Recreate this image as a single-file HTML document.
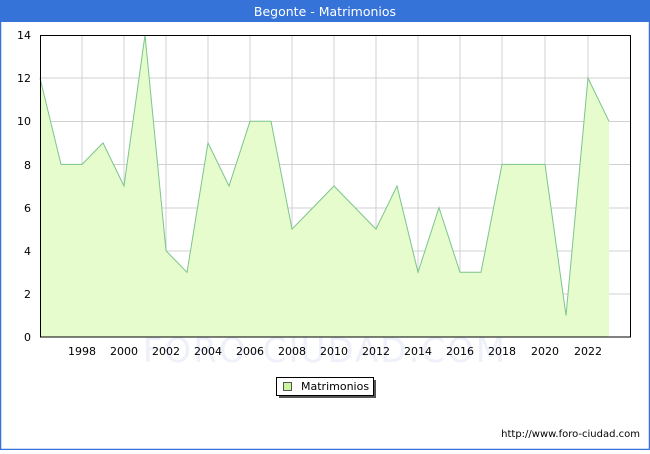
<!DOCTYPE html>
<html><head><meta charset="utf-8"><style>
body{margin:0;width:650px;height:450px;overflow:hidden;font-family:"DejaVu Sans","Liberation Sans",sans-serif;}
</style></head><body>
<svg width="650" height="450" xmlns="http://www.w3.org/2000/svg" font-family="DejaVu Sans, Liberation Sans, sans-serif">
<rect x="0" y="0" width="650" height="450" fill="#fff"/>
<rect x="0.5" y="0.5" width="649" height="449" fill="none" stroke="#3573d9" stroke-width="1.5"/>
<rect x="0" y="0" width="650" height="22" fill="#3573d9"/>
<text x="325" y="16" fill="#fff" font-size="12.5" text-anchor="middle">Begonte - Matrimonios</text>
<text x="325" y="362" fill="#eef0fa" font-size="34" text-anchor="middle" letter-spacing="2">FORO-CIUDAD.COM</text>
<g stroke="#d0d0d0" stroke-width="1">
<line x1="82" y1="35" x2="82" y2="337"/><line x1="124" y1="35" x2="124" y2="337"/><line x1="166" y1="35" x2="166" y2="337"/><line x1="208" y1="35" x2="208" y2="337"/><line x1="250" y1="35" x2="250" y2="337"/><line x1="292" y1="35" x2="292" y2="337"/><line x1="334" y1="35" x2="334" y2="337"/><line x1="376" y1="35" x2="376" y2="337"/><line x1="418" y1="35" x2="418" y2="337"/><line x1="460" y1="35" x2="460" y2="337"/><line x1="502" y1="35" x2="502" y2="337"/><line x1="545" y1="35" x2="545" y2="337"/><line x1="588" y1="35" x2="588" y2="337"/>
<line x1="40" y1="294" x2="630" y2="294"/><line x1="40" y1="251" x2="630" y2="251"/><line x1="40" y1="208" x2="630" y2="208"/><line x1="40" y1="164.5" x2="630" y2="164.5"/><line x1="40" y1="121.5" x2="630" y2="121.5"/><line x1="40" y1="78" x2="630" y2="78"/>
</g>
<polygon fill="#e6fccc" points="40,337 40,78.1 61,164.4 82,164.4 103,142.9 124,186 145,35 166,250.7 187,272.3 208,142.9 229,186 250,121.3 271,121.3 292,229.1 313,207.6 334,186 355,207.6 376,229.1 397,186 418,272.3 439,207.6 460,272.3 481,272.3 502,164.4 523,164.4 545,164.4 566,315.4 588,78.1 609,121.3 609,337"/>
<polyline fill="none" stroke="#7cc48e" stroke-width="1" points="40,78.1 61,164.4 82,164.4 103,142.9 124,186 145,35 166,250.7 187,272.3 208,142.9 229,186 250,121.3 271,121.3 292,229.1 313,207.6 334,186 355,207.6 376,229.1 397,186 418,272.3 439,207.6 460,272.3 481,272.3 502,164.4 523,164.4 545,164.4 566,315.4 588,78.1 609,121.3"/>
<rect x="40.5" y="35.5" width="590" height="301.5" fill="none" stroke="#000" stroke-width="1"/>
<g font-size="11" fill="#000" text-anchor="end">
<text x="31" y="341">0</text><text x="31" y="298">2</text><text x="31" y="255">4</text><text x="31" y="212">6</text><text x="31" y="169">8</text><text x="31" y="125">10</text><text x="31" y="82">12</text><text x="31" y="39">14</text>
</g>
<g font-size="11" fill="#000" text-anchor="middle">
<text x="82" y="355">1998</text><text x="124" y="355">2000</text><text x="166" y="355">2002</text><text x="208" y="355">2004</text><text x="250" y="355">2006</text><text x="292" y="355">2008</text><text x="334" y="355">2010</text><text x="376" y="355">2012</text><text x="418" y="355">2014</text><text x="460" y="355">2016</text><text x="502" y="355">2018</text><text x="545" y="355">2020</text><text x="588" y="355">2022</text>
</g>
<rect x="279" y="380" width="97" height="18" fill="#555"/>
<rect x="276.5" y="377.5" width="97" height="18" fill="#fff" stroke="#000"/>
<rect x="283.5" y="382.5" width="8" height="8" fill="#ccf5a0" stroke="#555"/>
<text x="301" y="390" font-size="11">Matrimonios</text>
<text x="640" y="437" font-size="10" text-anchor="end">http://www.foro-ciudad.com</text>
</svg>
</body></html>
